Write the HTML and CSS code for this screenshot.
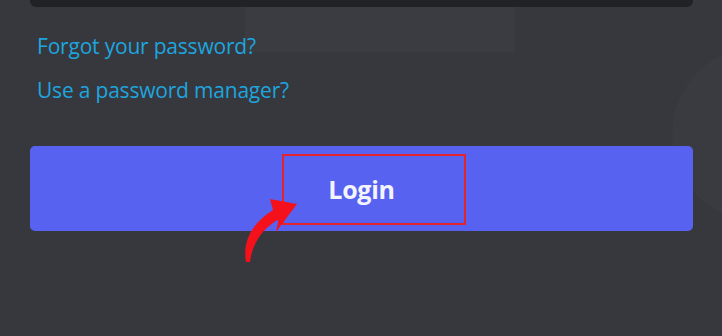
FILE: index.html
```html
<!DOCTYPE html>
<html lang="en">
<head>
<meta charset="utf-8">
<title>Login</title>
<link rel="stylesheet" href="styles.css">
</head>
<body>
<div class="page">
  <div class="deco-rect"></div>
  <div class="form">
    <div class="input-bottom"></div>
    <div class="links">
      <a class="link" href="#">Forgot your password?</a>
      <a class="link" href="#">Use a password manager?</a>
    </div>
    <button class="login-btn" type="button">
      <span class="highlight"></span>
      <span class="label">Login</span>
    </button>
  </div>
  <svg class="arrow" viewBox="236 195 66 72" width="66" height="72" aria-hidden="true">
    <path d="M246 262 C242.5 243 250.5 224 273 210 L270 199 L297 204 L276 232 L278.5 219.5 C262 229 252.5 243 250 262 Z" fill="#f5111b"/>
  </svg>
</div>
</body>
</html>
```
FILE: styles.css
```css
* { box-sizing: border-box; }
html, body { margin: 0; padding: 0; }
body {
  background: #36383d;
  font-family: "Open Sans", "Noto Sans", sans-serif;
  width: 722px;
  height: 336px;
  overflow: hidden;
}
.page {
  position: relative;
  width: 722px;
  height: 336px;
  overflow: hidden;
  background: radial-gradient(circle at 760px 134px, #393b40 87px, rgba(57, 59, 64, 0) 88px);
}
.deco-rect {
  position: absolute;
  left: 245px;
  top: 6px;
  width: 270px;
  height: 46px;
  background: #3a3c41;
}
.form {
  position: relative;
  padding: 0 29px 0 30px;
  display: flex;
  flex-direction: column;
}
.input-bottom {
  height: 7px;
  background: #202225;
  border-radius: 0 0 6px 6px;
}
.links {
  display: flex;
  flex-direction: column;
  gap: 20px;
  padding: 27px 0 0 7px;
}
.link {
  font-size: 21px;
  line-height: 24px;
  color: #1ea5df;
  text-decoration: none;
  letter-spacing: -0.2px;
}
.login-btn {
  position: relative;
  margin-top: 44px;
  height: 85px;
  border: 0;
  border-radius: 5px;
  background: #5763f0;
  color: #f4f4ff;
  font-family: "Open Sans", "Noto Sans", sans-serif;
  font-weight: 700;
  font-size: 25px;
  display: flex;
  align-items: center;
  justify-content: center;
  padding: 0;
}
.label { position: relative; letter-spacing: -0.3px; }
.highlight {
  position: absolute;
  left: 252px;
  top: 8px;
  width: 184px;
  height: 71px;
  border: 2px solid #e3232e;
}
.arrow {
  position: absolute;
  left: 236px;
  top: 195px;
}
```
